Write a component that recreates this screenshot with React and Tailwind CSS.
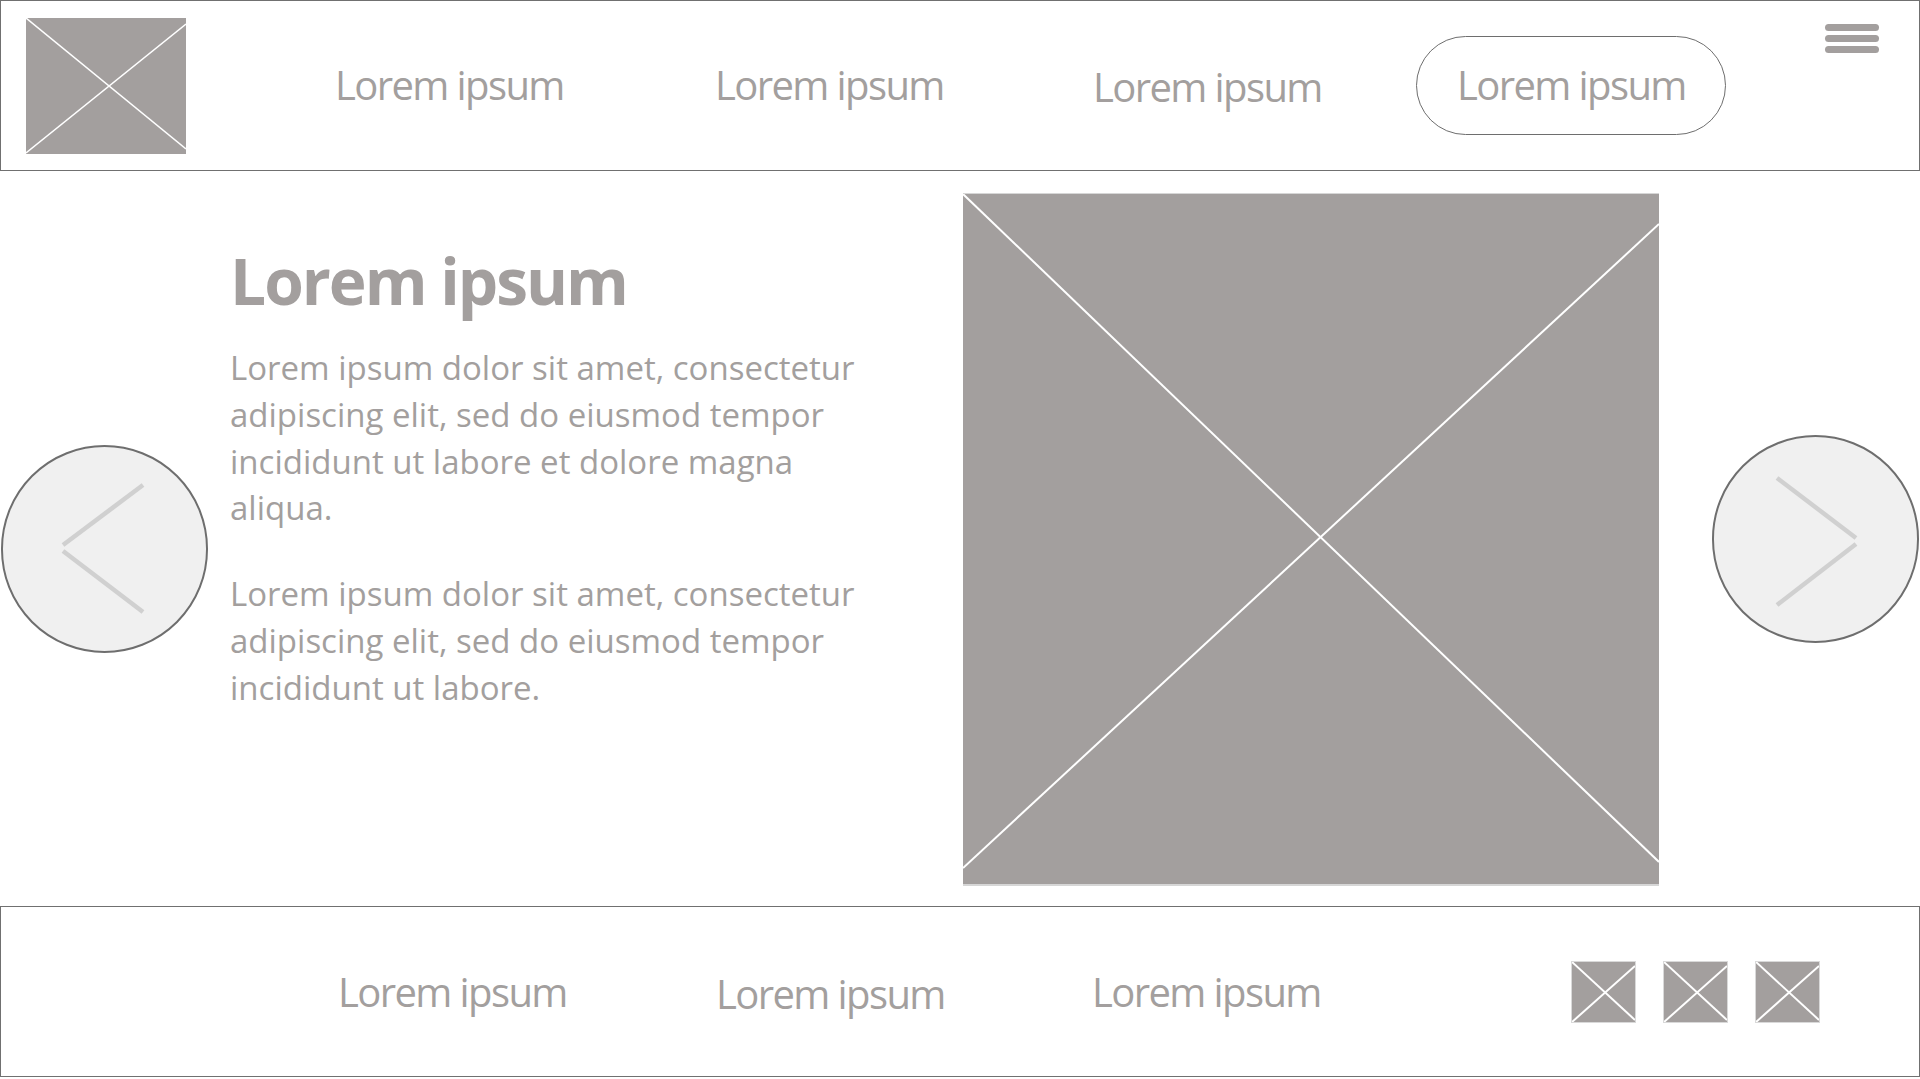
import React from 'react';

const font = "font-['Open_Sans','Noto_Sans',sans-serif]";

function Placeholder({ w, h, a, b, className = '', stroke = 1.5 }) {
  // grey box with the white cross, a/b are the two diagonals
  return (
    <svg
      width={w}
      height={h}
      viewBox={`0 0 ${w} ${h}`}
      className={`block shrink-0 ${className}`}
    >
      <rect x="0" y="0" width={w} height={h} fill="#a39f9e" />
      <line x1={a[0]} y1={a[1]} x2={a[2]} y2={a[3]} stroke="#ffffff" strokeWidth={stroke} />
      <line x1={b[0]} y1={b[1]} x2={b[2]} y2={b[3]} stroke="#ffffff" strokeWidth={stroke} />
    </svg>
  );
}

function Arrow({ dir, className = '' }) {
  const lines =
    dir === 'left'
      ? [[142, 40, 62, 100], [62, 106, 142, 167]]
      : [[65, 43, 144, 103], [144, 109, 65, 170]];
  return (
    <button
      className={`relative shrink-0 w-[207px] h-[208px] rounded-full bg-[#f0f0f0] border-2 border-[#6e6e6e] ${className}`}
    >
      <svg width="207" height="208" viewBox="0 0 207 208" className="absolute -left-[2px] -top-[2px]">
        {lines.map((l, i) => (
          <line key={i} x1={l[0]} y1={l[1]} x2={l[2]} y2={l[3]} stroke="#d0d0d0" strokeWidth="4.5" />
        ))}
      </svg>
    </button>
  );
}

function NavText({ children, className = '' }) {
  return (
    <span className={`w-[230px] shrink-0 whitespace-nowrap text-[40px] tracking-[-1.6px] text-[#a39f9e] ${className}`}>
      {children}
    </span>
  );
}

export default function App() {
  return (
    <div className={`w-[1920px] h-[1079px] bg-white overflow-hidden ${font}`}>
      {/* header */}
      <header className="flex items-center h-[171px] border border-[#707070]">
        <Placeholder
          w={160}
          h={136}
          className="ml-[25px]"
          a={[0, 0, 160, 131]}
          b={[160, 6, 0, 135]}
        />
        <NavText className="ml-[149px] -mt-[2px]">Lorem ipsum</NavText>
        <NavText className="ml-[150px] -mt-[2px]">Lorem ipsum</NavText>
        <NavText className="ml-[148px] mt-[2px]">Lorem ipsum</NavText>
        <button className="ml-[93px] w-[310px] h-[99px] shrink-0 rounded-full border border-[#6e6e6e] text-left pl-[40px] pb-[2px] text-[40px] tracking-[-1.6px] text-[#a39f9e] whitespace-nowrap">
          Lorem ipsum
        </button>
        <div className="self-start mt-[23px] ml-[99px] flex flex-col gap-[4px]">
          <span className="block w-[54px] h-[7px] rounded-full bg-[#a39f9e]" />
          <span className="block w-[54px] h-[7px] rounded-full bg-[#a39f9e]" />
          <span className="block w-[54px] h-[7px] rounded-full bg-[#a39f9e]" />
        </div>
      </header>

      {/* hero */}
      <main className="flex items-start h-[735px]">
        <Arrow dir="left" className="ml-[1px] mt-[274px]" />
        <div className="ml-[22px] w-[733px] shrink-0 pt-[78px] text-[#a39f9e]">
          <h1 className="text-[64px] leading-[64px] font-bold tracking-[-2px] whitespace-nowrap">Lorem ipsum</h1>
          <p className="mt-[32px] text-[33px] leading-[46.8px] whitespace-nowrap">
            Lorem ipsum dolor sit amet, consectetur
            <br />
            adipiscing elit, sed do eiusmod tempor
            <br />
            incididunt ut labore et dolore magna
            <br />
            aliqua.
          </p>
          <p className="mt-[39px] text-[33px] leading-[46.8px] whitespace-nowrap">
            Lorem ipsum dolor sit amet, consectetur
            <br />
            adipiscing elit, sed do eiusmod tempor
            <br />
            incididunt ut labore.
          </p>
        </div>
        <div className="mt-[22px] shrink-0 border-t border-b-2 border-[#d6d6d6]">
          <Placeholder w={696} h={690} stroke={2} a={[0, 0, 696, 668]} b={[696, 30, 0, 674]} />
        </div>
        <Arrow dir="right" className="ml-[53px] mt-[264px]" />
      </main>

      {/* footer */}
      <footer className="flex items-center h-[171px] border border-[#707070]">
        <NavText className="ml-[337px]">Lorem ipsum</NavText>
        <NavText className="ml-[148px] mt-[4px]">Lorem ipsum</NavText>
        <NavText className="ml-[146px]">Lorem ipsum</NavText>
        <div className="ml-[249px] flex gap-[27px]">
          {[0, 1, 2].map((i) => (
            <div key={i} className="border border-[#d9d9d9]">
              <Placeholder w={63} h={60} stroke={2} a={[0, 0, 63, 58]} b={[63, 4, 0, 60]} />
            </div>
          ))}
        </div>
      </footer>
    </div>
  );
}
